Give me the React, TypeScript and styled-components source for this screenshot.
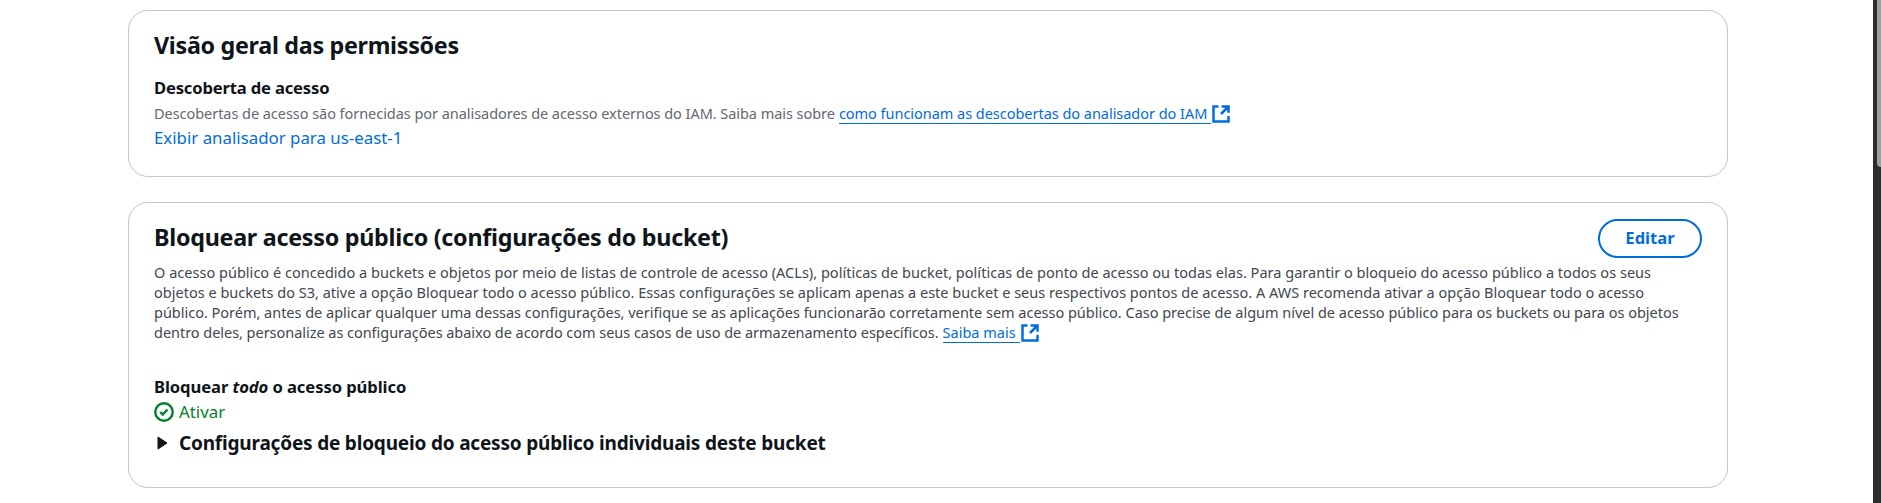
import React from "react";
import styled, { createGlobalStyle } from "styled-components";

const GlobalStyle = createGlobalStyle`
  * { box-sizing: border-box; }
  body { margin: 0; background: #fff; color: #0f141a; font-family: "Noto Sans", sans-serif; overflow: hidden; }
  h2, h3, p { margin: 0; }
`;

const Page = styled.div`
  display: flex;
  justify-content: space-between;
  height: 503px;
`;

const Content = styled.main`
  display: flex;
  flex-direction: column;
  gap: 25px;
  width: 1728px;
  padding: 10px 0 0 128px;
`;

const Card = styled.section<{ $height: number }>`
  display: flex;
  flex-direction: column;
  height: ${(p) => p.$height}px;
  padding: 15px 25px;
  border: 1px solid #c6c6cd;
  border-radius: 20px;
`;

const CardHeader = styled.header`
  display: flex;
  justify-content: space-between;
  align-items: center;
  height: 40px;
`;

const Title = styled.h2<{ $tracking: number }>`
  padding-bottom: 2px;
  font-size: 23.3px;
  font-weight: 700;
  line-height: 30px;
  letter-spacing: ${(p) => p.$tracking}px;
`;

const Label = styled.h3<{ $gap: number; $tracking: number }>`
  margin-top: ${(p) => p.$gap}px;
  font-size: 16.6px;
  font-weight: 700;
  line-height: 25px;
  letter-spacing: ${(p) => p.$tracking}px;
`;

const Line = styled.span<{ $tracking?: number }>`
  letter-spacing: ${(p) => p.$tracking ?? 0}px;
  white-space: pre;
`;

const Hint = styled.p`
  display: flex;
  height: 24px;
  margin-top: 1px;
  padding-top: 2px;
  color: #656871;
  font-size: 14.5px;
  line-height: 20px;
`;

const Description = styled.p`
  display: flex;
  flex-direction: column;
  margin-top: 4px;
  color: #424650;
  font-size: 14.5px;
  line-height: 20px;
`;

const DescriptionRow = styled.span`
  display: flex;
  height: 20px;
`;

const LinkText = styled.a<{ $tracking?: number }>`
  height: 21px;
  margin-left: 4px;
  padding-right: 4px;
  border-bottom: 1px solid #006ce0;
  color: #006ce0;
  line-height: 20px;
  letter-spacing: ${(p) => p.$tracking ?? 0}px;
  white-space: nowrap;
`;

const PlainLink = styled.a`
  color: #006ce0;
  font-size: 16.85px;
  line-height: 25px;
`;

const EditButton = styled.button`
  width: 104px;
  height: 39px;
  padding: 0;
  border: 2px solid #006ce0;
  border-radius: 20px;
  background: #fff;
  color: #006ce0;
  font: 700 16.6px/24px "Noto Sans", sans-serif;
`;

const Status = styled.div`
  display: flex;
  align-items: center;
  gap: 5px;
  height: 25px;
  color: #00802f;
  font-size: 16.85px;
`;

const StatusIcon = styled.svg`
  flex: none;
  margin-top: 1px;
`;

const Expander = styled.div`
  display: flex;
  align-items: center;
  gap: 11px;
  height: 36px;
  margin-top: 1px;
  padding-left: 3px;
  font-size: 19px;
  font-weight: 700;
`;

const Icon = styled.svg`
  flex: none;
  margin-top: 1px;
`;

const ScrollTrack = styled.aside`
  width: 8px;
  padding-left: 4px;
  background: #2c2c2c;
`;

const ScrollThumb = styled.div`
  height: 167px;
  border-bottom-left-radius: 4px;
  background: #9f9f9f;
`;

const ExternalIcon = () => (
  <Icon width="20" height="20" viewBox="0 0 16 16" fill="none" stroke="#006ce0" strokeWidth="2">
    <path d="M6 2H2v12h12v-4.5M8.5 2H14v5M14 2 8 8" />
  </Icon>
);

export default function App() {
  return (
    <>
      <GlobalStyle />
      <Page>
        <Content>
          <Card $height={167}>
            <CardHeader>
              <Title $tracking={-0.3}>Visão geral das permissões</Title>
            </CardHeader>
            <Label $gap={9} $tracking={-0.17}>Descoberta de acesso</Label>
            <Hint>
              <Line $tracking={-0.047}>Descobertas de acesso são fornecidas por analisadores de acesso externos do IAM. Saiba mais sobre</Line>
              <LinkText $tracking={-0.03}>como funcionam as descobertas do analisador do IAM</LinkText>
              <ExternalIcon />
            </Hint>
            <PlainLink>Exibir analisador para us-east-1</PlainLink>
          </Card>
          <Card $height={286}>
            <CardHeader>
              <Title $tracking={-0.27}>Bloquear acesso público (configurações do bucket)</Title>
              <EditButton>Editar</EditButton>
            </CardHeader>
            <Description>
              <DescriptionRow>
                <Line $tracking={0.022}>O acesso público é concedido a buckets e objetos por meio de listas de controle de acesso (ACLs), políticas de bucket, políticas de ponto de acesso ou todas elas. Para garantir o bloqueio do acesso público a todos os seus</Line>
              </DescriptionRow>
              <DescriptionRow>
                <Line $tracking={0.012}>objetos e buckets do S3, ative a opção Bloquear todo o acesso público. Essas configurações se aplicam apenas a este bucket e seus respectivos pontos de acesso. A AWS recomenda ativar a opção Bloquear todo o acesso</Line>
              </DescriptionRow>
              <DescriptionRow>
                <Line $tracking={-0.015}>público. Porém, antes de aplicar qualquer uma dessas configurações, verifique se as aplicações funcionarão corretamente sem acesso público. Caso precise de algum nível de acesso público para os buckets ou para os objetos</Line>
              </DescriptionRow>
              <DescriptionRow>
                <Line $tracking={-0.038}>dentro deles, personalize as configurações abaixo de acordo com seus casos de uso de armazenamento específicos.</Line>
                <LinkText>Saiba mais</LinkText>
                <ExternalIcon />
              </DescriptionRow>
            </Description>
            <Label $gap={32} $tracking={-0.08}>Bloquear <em>todo</em> o acesso público</Label>
            <Status>
              <StatusIcon width="20" height="20" viewBox="0 0 16 16" fill="none" stroke="#00802f" strokeWidth="1.9">
                <circle cx="8" cy="8" r="7" />
                <path d="m5 8 2 2 3.8-4" />
              </StatusIcon>
              <Line>Ativar</Line>
            </Status>
            <Expander>
              <svg width="11" height="14" viewBox="0 0 11 14" fill="#0f141a" stroke="#0f141a" strokeLinejoin="round">
                <path d="M1 1v12l9-6z" />
              </svg>
              <Line $tracking={-0.19}>Configurações de bloqueio do acesso público individuais deste bucket</Line>
            </Expander>
          </Card>
        </Content>
        <ScrollTrack><ScrollThumb /></ScrollTrack>
      </Page>
    </>
  );
}
